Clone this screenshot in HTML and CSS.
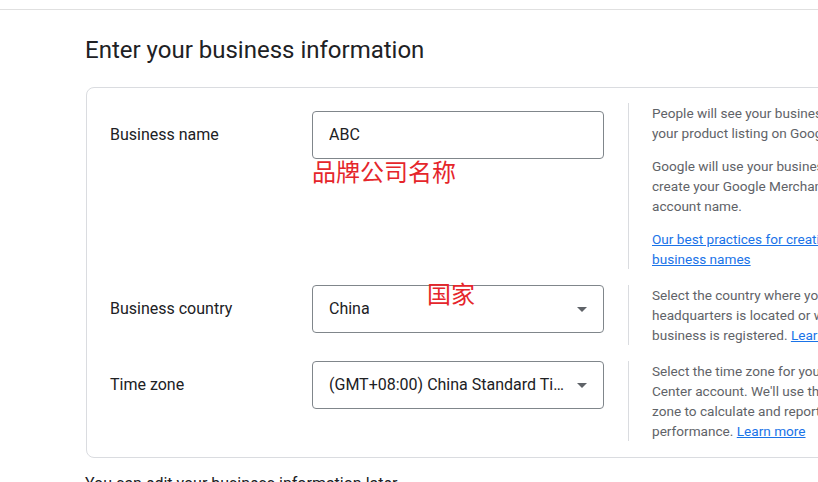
FILE: index.html
```html
<!DOCTYPE html>
<html lang="en">
<head>
<meta charset="utf-8">
<title>Enter your business information</title>
<link rel="stylesheet" href="styles.css">
</head>
<body>
<div class="topbar"></div>
<main class="page">
  <h1 class="title">Enter your business information</h1>
  <section class="card">
    <div class="row">
      <div class="label label-first">Business name</div>
      <div class="field">
        <div class="input input-first"><span class="value">ABC</span></div>
        <div class="note">品牌公司名称</div>
      </div>
      <div class="help">
        <p>People will see your business name in your product listing on Google.</p>
        <p>Google will use your business name to create your Google Merchant Center account name.</p>
        <p><a href="#">Our best practices for creating business names</a></p>
      </div>
    </div>
    <div class="row">
      <div class="label">Business country</div>
      <div class="field">
        <div class="input select"><span class="value">China</span><span class="arrow"></span></div>
        <div class="note note-float">国家</div>
      </div>
      <div class="help">
        <p>Select the country where your business headquarters is located or where your business is registered. <a href="#">Learn more</a></p>
      </div>
    </div>
    <div class="row">
      <div class="label">Time zone</div>
      <div class="field">
        <div class="input select"><span class="value">(GMT+08:00) China Standard Time</span><span class="arrow"></span></div>
      </div>
      <div class="help">
        <p>Select the time zone for your Merchant Center account. We'll use this time zone to calculate and report performance. <a href="#">Learn more</a></p>
      </div>
    </div>
  </section>
  <p class="footnote">You can edit your business information later</p>
</main>
</body>
</html>
```
FILE: styles.css
```css
html, body {
  margin: 0;
  padding: 0;
  background: #ffffff;
}
body {
  width: 818px;
  height: 482px;
  overflow: hidden;
  font-family: Roboto, "Noto Sans CJK SC", sans-serif;
  color: #202124;
}
.topbar {
  height: 9px;
  border-bottom: 1px solid #e0e0e0;
}
.page {
  padding-left: 86px;
}
.title {
  margin: 24px 0 21px -1px;
  font-size: 24px;
  line-height: 32px;
  font-weight: 400;
  color: #202124;
}
.card {
  width: 1000px;
  box-sizing: border-box;
  border: 1px solid #dadce0;
  border-radius: 8px;
  padding: 15px 23px 16px;
  display: flex;
  flex-direction: column;
  gap: 16px;
}
.row {
  display: grid;
  grid-template-columns: 202px 292px auto;
  align-items: start;
}
.label {
  height: 48px;
  display: flex;
  align-items: center;
  font-size: 16px;
  line-height: 24px;
}
.label-first,
.input-first {
  margin-top: 8px;
}
.field {
  position: relative;
}
.input {
  box-sizing: border-box;
  width: 292px;
  height: 48px;
  border: 1px solid #80868b;
  border-radius: 4px;
  padding: 0 16px;
  display: flex;
  align-items: center;
  gap: 12px;
  font-size: 16px;
  line-height: 24px;
}
.value {
  flex: 1;
  min-width: 0;
  white-space: nowrap;
  overflow: hidden;
  text-overflow: ellipsis;
}
.arrow {
  flex: none;
  width: 0;
  height: 0;
  border-left: 5px solid transparent;
  border-right: 5px solid transparent;
  border-top: 5px solid #5f6368;
}
.note {
  font-family: "Noto Sans CJK SC", sans-serif;
  font-size: 24px;
  line-height: 24px;
  color: #e5262b;
}
.note-float {
  position: absolute;
  left: 115px;
  top: -4px;
}
.help {
  margin-left: 24px;
  width: 238px;
  border-left: 1px solid #dadce0;
  padding-left: 23px;
  font-size: 13.6px;
  line-height: 20px;
  color: #5f6368;
}
.help p {
  margin: 0 0 13px;
}
.help p:last-child {
  margin-bottom: 0;
}
.help a {
  color: #1a73e8;
  text-decoration: underline;
}
.footnote {
  margin: 14px 0 0 -1px;
  font-size: 16px;
  line-height: 24px;
  color: #202124;
}
```
